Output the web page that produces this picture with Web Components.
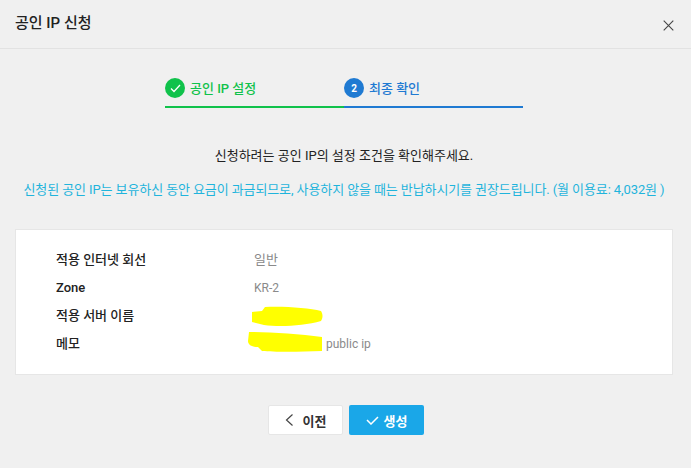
<!DOCTYPE html>
<html lang="ko">
<head>
<meta charset="utf-8">
<title>공인 IP 신청</title>
<style>
html, body { margin: 0; height: 100%; background: #f0f0f0; }
body { font-family: Roboto, "Noto Sans CJK KR", sans-serif; overflow: hidden; }
</style>
</head>
<body>
<ip-modal>
  <span slot="title">공인 IP 신청</span>
  <ip-stepper>
    <ip-step state="done" label="공인 IP 설정"></ip-step>
    <ip-step state="current" num="2" label="최종 확인"></ip-step>
  </ip-stepper>
  <ip-notice></ip-notice>
  <ip-card>
    <ip-row label="적용 인터넷 회선"><span style="font-size:13px">일반</span></ip-row>
    <ip-row label="Zone">KR-2</ip-row>
    <ip-row label="적용 서버 이름"><ip-mark kind="server"></ip-mark></ip-row>
    <ip-row label="메모"><ip-mark kind="memo"></ip-mark><span>public ip</span></ip-row>
  </ip-card>
  <ip-actions></ip-actions>
</ip-modal>

<script>
class IpModal extends HTMLElement {
    constructor() {
        super();
        this.attachShadow({ mode: 'open' });
    }

    connectedCallback() {
        this.shadowRoot.innerHTML = `
            <style>
                :host { display: block; width: 691px; height: 468px; background: #f0f0f0; }
                header {
                    height: 49px;
                    box-sizing: border-box;
                    border-bottom: 1px solid #e2e2e2;
                    padding: 0 17px 5px 15px;
                    display: flex;
                    align-items: center;
                    justify-content: space-between;
                    font-size: 15px;
                    font-weight: 500;
                    color: #222;
                }
                svg { display: block; margin-top: 7px; }
                main { padding: 29px 18px 0 15px; }
            </style>
            <header>
                <slot name="title"></slot>
                <svg width="11" height="11" viewBox="0 0 11 11" fill="none" stroke="#444" stroke-width="1.1">
                    <path d="M.7.7l9.6 9.6M10.3.7L.7 10.3"/>
                </svg>
            </header>
            <main><slot></slot></main>
        `;
    }
}

class IpStepper extends HTMLElement {
    constructor() {
        super();
        this.attachShadow({ mode: 'open' });
    }

    connectedCallback() {
        this.shadowRoot.innerHTML = `
            <style>
                :host { display: flex; width: 358px; margin-left: 150px; }
            </style>
            <slot></slot>
        `;
    }
}

class IpStep extends HTMLElement {
    constructor() {
        super();
        this.attachShadow({ mode: 'open' });
    }

    connectedCallback() {
        const done = this.getAttribute('state') === 'done';
        const color = done ? '#10c24b' : '#1f7ad2';
        const mark = done
            ? `<svg width="11" height="9" viewBox="0 0 11 9" fill="none" stroke="#fff" stroke-width="1.3"><path d="M1 4.5l3 3 6-6.500"/></svg>`
            : `<b>${this.getAttribute('num')}</b>`;
        this.shadowRoot.innerHTML = `
            <style>
                :host {
                    display: flex;
                    flex: 1;
                    align-items: center;
                    gap: 5px;
                    height: 20px;
                    padding-bottom: 8px;
                    border-bottom: 2px solid ${color};
                    color: ${color};
                    font-size: 13px;
                    font-weight: 500;
                }
                i {
                    width: 20px;
                    height: 20px;
                    border-radius: 50%;
                    background: ${color};
                    display: flex;
                    align-items: center;
                    justify-content: center;
                    font-style: normal;
                }
                b { color: #fff; font-size: 10px; font-weight: 700; }
                span { padding-bottom: 2px; }
            </style>
            <i>${mark}</i><span>${this.getAttribute('label')}</span>
        `;
    }
}

class IpNotice extends HTMLElement {
    constructor() {
        super();
        this.attachShadow({ mode: 'open' });
    }

    connectedCallback() {
        this.shadowRoot.innerHTML = `
            <style>
                :host { display: block; text-align: center; font-size: 13px; padding-top: 39px; white-space: nowrap; }
                p { margin: 0; line-height: 18px; }
                .main { color: #222; }
                .warn { color: #1fb4dc; margin-top: 16px; letter-spacing: -0.1px; }
            </style>
            <p class="main">신청하려는 공인 IP의 설정 조건을 확인해주세요.</p>
            <p class="warn">신청된 공인 IP는 보유하신 동안 요금이 과금되므로, 사용하지 않을 때는 반납하시기를 권장드립니다. (월 이용료: 4,032원 )</p>
        `;
    }
}

class IpCard extends HTMLElement {
    constructor() {
        super();
        this.attachShadow({ mode: 'open' });
    }

    connectedCallback() {
        this.shadowRoot.innerHTML = `
            <style>
                :host {
                    display: block;
                    box-sizing: border-box;
                    height: 146px;
                    margin-top: 30px;
                    padding: 15px 40px;
                    background: #fff;
                    border: 1px solid #e6e6e6;
                }
            </style>
            <slot></slot>
        `;
    }
}

class IpRow extends HTMLElement {
    constructor() {
        super();
        this.attachShadow({ mode: 'open' });
    }

    connectedCallback() {
        this.shadowRoot.innerHTML = `
            <style>
                :host {
                    display: grid;
                    grid-template-columns: 198px 1fr;
                    align-items: center;
                    height: 28px;
                    font-size: 12px;
                    line-height: 18px;
                }
                .label { font-size: 13px; font-weight: 500; color: #222; padding-top: 2px; }
                .value { display: flex; align-items: center; color: #8a8a8a; padding-top: 2px; }
            </style>
            <div class="label">${this.getAttribute('label')}</div>
            <div class="value"><slot></slot></div>
        `;
    }
}

class IpMark extends HTMLElement {
    constructor() {
        super();
        this.attachShadow({ mode: 'open' });
    }

    connectedCallback() {
        const memo = this.getAttribute('kind') === 'memo';
        const shape = memo
            ? 'M-5 -3C15 -3 45 -1 68 2L68 16C45 17 20 17 8 16L4 12C-2 12 -6 10 -6 6Z'
            : 'M-2 5L8 4 11 0C30 -1 55 1 67 4 69 7 69 11 67 14 50 19 25 20 10 18L-2 15Z';
        this.shadowRoot.innerHTML = `
            <style>
                :host { display: block; width: 72px; height: 18px; }
                svg { display: block; overflow: visible; }
            </style>
            <svg width="72" height="18" viewBox="0 0 72 18"><path d="${shape}" fill="#ffff00"/></svg>
        `;
    }
}

class IpActions extends HTMLElement {
    constructor() {
        super();
        this.attachShadow({ mode: 'open' });
    }

    connectedCallback() {
        this.shadowRoot.innerHTML = `
            <style>
                :host { display: flex; justify-content: center; gap: 6px; margin-top: 30px; padding-left: 4px; }
                button {
                    box-sizing: border-box;
                    height: 30px;
                    border-radius: 2px;
                    display: flex;
                    align-items: center;
                    justify-content: center;
                    font: 700 13px Roboto, "Noto Sans CJK KR", sans-serif;
                    padding: 0;
                }
                .prev { width: 75px; gap: 10px; background: #fff; border: 1px solid #e6e6e6; color: #333; }
                .ok { width: 75px; gap: 5px; background: #1aa7e8; border: 0; color: #fff; }
                svg { display: block; }
            </style>
            <button class="prev">
                <svg width="8" height="12" viewBox="0 0 8 12" fill="none" stroke="#444" stroke-width="1.2"><path d="M7.500 .5L1.500 6l6 5.500"/></svg>
                이전
            </button>
            <button class="ok">
                <svg width="13" height="9" viewBox="0 0 13 9" fill="none" stroke="#fff" stroke-width="1.500"><path d="M1 4l4 4 7-7"/></svg>
                생성
            </button>
        `;
    }
}

customElements.define('ip-modal', IpModal);
customElements.define('ip-stepper', IpStepper);
customElements.define('ip-step', IpStep);
customElements.define('ip-notice', IpNotice);
customElements.define('ip-card', IpCard);
customElements.define('ip-row', IpRow);
customElements.define('ip-mark', IpMark);
customElements.define('ip-actions', IpActions);
</script>
</body>
</html>
